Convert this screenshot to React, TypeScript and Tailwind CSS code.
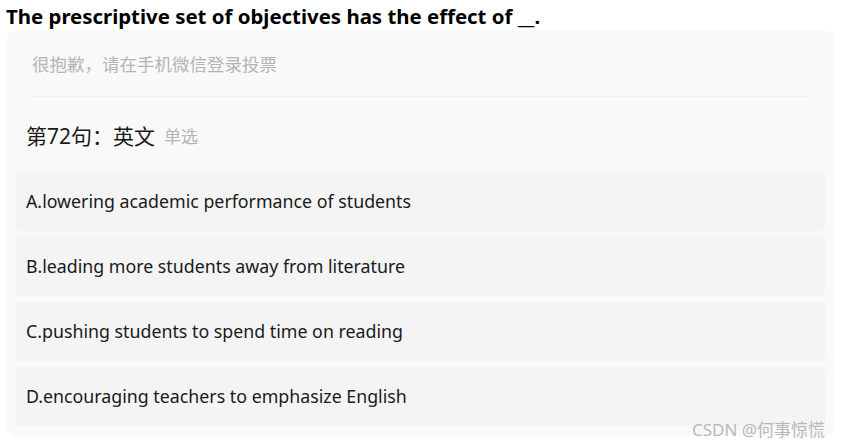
const options = [
  "A.lowering academic performance of students",
  "B.leading more students away from literature",
  "C.pushing students to spend time on reading",
  "D.encouraging teachers to emphasize English",
];

export default function App() {
  return (
    <div className="relative w-[843px] h-[448px] bg-white font-['Noto_Sans','Noto_Sans_CJK_SC',sans-serif] overflow-hidden">
      <h1 className="pl-[6px] pt-[3px] text-[20.4px] leading-[26px] font-bold text-black h-[31px]">
        The prescriptive set of objectives has the effect of __.
      </h1>
      <div className="ml-[6px] w-[829px] h-[405px] bg-[#f9f9f9] rounded-[10px] px-[10px]">
        <div className="mx-[16px] h-[66px] border-b border-[#efefef] pt-[21px] text-[17.5px] leading-[24px] text-[#b5b5b5]">
          很抱歉，请在手机微信登录投票
        </div>
        <div className="h-[75px] flex items-center pl-[10px] pt-[5px]">
          <span className="text-[21px] text-[#1a1a1a]">第72句：英文</span>
          <span className="ml-[9px] text-[17px] text-[#b5b5b5]">单选</span>
        </div>
        <div className="flex flex-col gap-[6px]">
          {options.map((o) => (
            <div
              key={o}
              className="h-[59px] bg-[#f4f4f4] rounded-[4px] flex items-center pl-[10px] text-[17.8px] text-[#1a1a1a]"
            >
              {o}
            </div>
          ))}
        </div>
      </div>
      <div className="absolute left-[692px] top-[417px] text-[17px] text-[#b8b8b8]">
        CSDN @何事惊慌
      </div>
    </div>
  );
}
